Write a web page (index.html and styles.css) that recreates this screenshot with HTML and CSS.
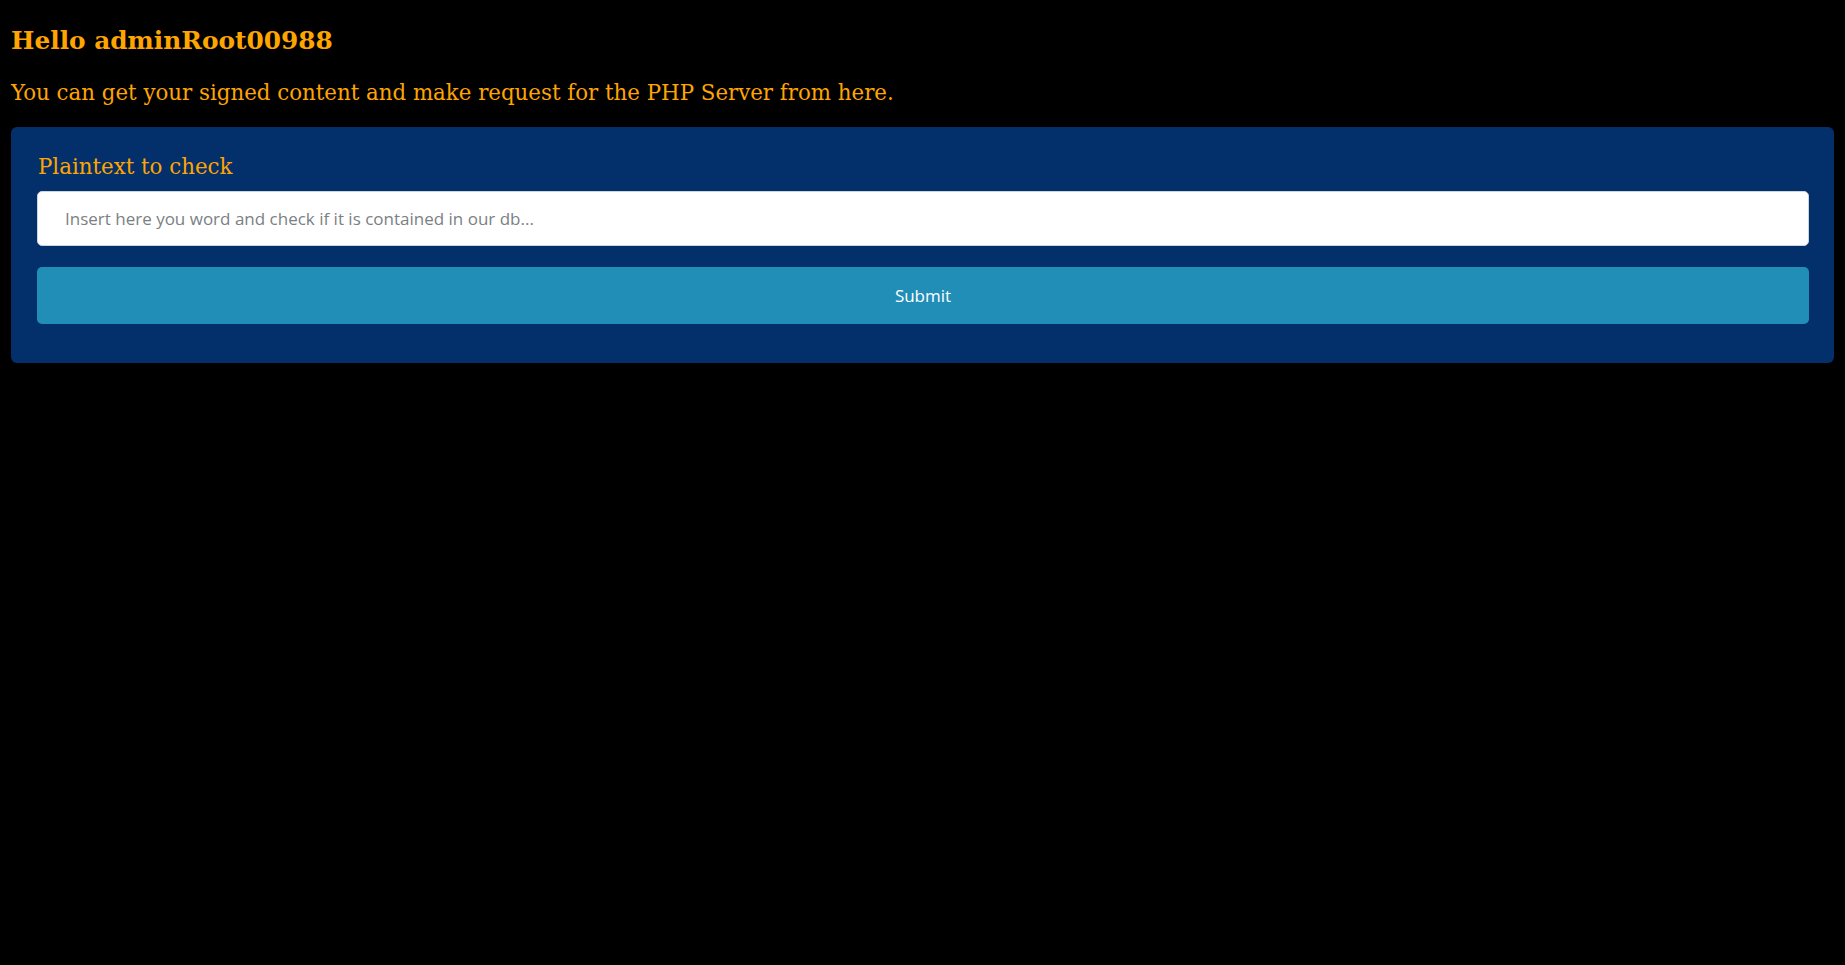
FILE: index.html
```html
<!DOCTYPE html>
<html>
<head>
<meta charset="utf-8">
<link rel="stylesheet" href="styles.css">
</head>
<body>
<h2 class="greeting">Hello adminRoot00988</h2>
<p class="intro">You can get your signed content and make request for the PHP Server from here.</p>
<form class="card">
  <label class="label" for="pt">Plaintext to check</label>
  <input class="field" id="pt" type="text" placeholder="Insert here you word and check if it is contained in our db...">
  <button class="submit" type="button">Submit</button>
</form>
</body>
</html>
```
FILE: styles.css
```css
html, body {
  background: #000;
}
body {
  margin: 0;
  padding: 11px;
  font-family: "DejaVu Serif", serif;
  color: #ffa500;
}
.greeting {
  margin: 15px 0 0 0;
  font-size: 24.8px;
  font-weight: bold;
  line-height: 29px;
}
.intro {
  margin: 25px 0 0 0;
  font-size: 21.33px;
  line-height: 25px;
}
.card {
  margin-top: 22px;
  background: #03306b;
  border-radius: 6px;
  padding: 26px 25px 39px 26px;
  display: flex;
  flex-direction: column;
}
.label {
  font-size: 21.33px;
  line-height: 28px;
  margin-left: 1px;
  margin-bottom: 10px;
}
.field {
  height: 55px;
  box-sizing: border-box;
  border: 1px solid #cfd4da;
  border-radius: 5px;
  background: #fff;
  padding: 0 27px;
  font-family: "Open Sans", sans-serif;
  font-size: 17px;
  color: #495057;
  outline: none;
}
.field::placeholder {
  color: #7b7f84;
}
.submit {
  margin-top: 21px;
  height: 57px;
  border: none;
  border-radius: 5px;
  background: #218eb7;
  color: #fff;
  font-family: "Open Sans", sans-serif;
  font-size: 17px;
}
```
